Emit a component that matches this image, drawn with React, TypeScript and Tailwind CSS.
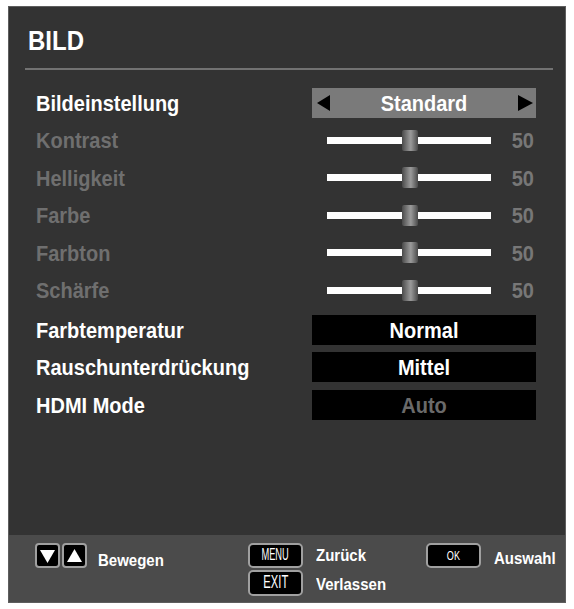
import React from "react";

const T = ({ children, className = "" }: { children: React.ReactNode; className?: string }) => (
  <span className={`inline-block scale-y-[1.12] ${className}`}>{children}</span>
);

const Slider = () => (
  <div className="flex w-[224px] items-center">
    <div className="relative ml-[15px] h-[7px] w-[164px] bg-white">
      <div className="absolute left-[75px] top-[-7px] h-[21px] w-[16px] rounded-[2px] bg-[linear-gradient(to_right,#4a4a4a,#8e8e8e_45%,#9a9a9a_55%,#4a4a4a)]" />
    </div>
    <div className="flex-1 pr-[2px] text-right text-[20px] font-bold text-[#777777]">
      <T>50</T>
    </div>
  </div>
);

const Row = ({ label, dim, children }: { label: string; dim?: boolean; children: React.ReactNode }) => (
  <div className="flex h-[37.5px] items-center justify-between pl-[27px] pr-[29px]">
    <div className={`text-[20px] font-bold ${dim ? "text-[#6f6f6f]" : "text-white"}`}>
      <T>{label}</T>
    </div>
    {children}
  </div>
);

const ValueBox = ({ text, dim }: { text: string; dim?: boolean }) => (
  <div
    className={`flex h-[30px] w-[224px] items-center justify-center bg-black text-[20px] font-bold ${
      dim ? "text-[#6a6a6a]" : "text-white"
    }`}
  >
    <T>{text}</T>
  </div>
);

const Key = ({ children, textClass }: { children: React.ReactNode; textClass: string }) => (
  <div className="flex h-[25px] w-[55px] items-center justify-center rounded-[5px] border-2 border-[#a0a0a0] bg-black text-white">
    <span className={`inline-block font-normal ${textClass}`}>{children}</span>
  </div>
);

const ArrowKey = ({ up }: { up?: boolean }) => (
  <div className="flex h-[25px] w-[25px] items-center justify-center rounded-[4px] border-2 border-[#a0a0a0] bg-black">
    <svg width="15" height="14" viewBox="0 0 15 14">
      {up ? <polygon points="7.5,0 15,13 0,13" fill="#fff" /> : <polygon points="0,1 15,1 7.5,14" fill="#fff" />}
    </svg>
  </div>
);

export default function App() {
  return (
    <div className="h-[609px] w-[574px] overflow-hidden bg-white pl-[8px] pt-[6px] font-['Liberation_Sans',Arial,sans-serif]">
      <div className="flex h-[597px] w-[558px] flex-col border border-[#5e5e5e] bg-[#333333]">
        <div className="flex-1">
          <div className="flex h-[61px] items-center pl-[19px] pt-[6px] text-[24px] font-bold text-white">
            <T className="scale-y-[1.15]">BILD</T>
          </div>
          <div className="ml-[16px] mr-[12px] h-[2px] bg-[#727272]" />
          <div className="mt-[14px]">
            <Row label="Bildeinstellung">
              <div className="flex h-[30px] w-[224px] items-center justify-between bg-[#7a7a7a] pl-[5px] pr-[3px] text-[20px] font-bold text-white">
                <svg width="13" height="16" viewBox="0 0 13 16">
                  <polygon points="0,8 13,0 13,16" fill="#000" />
                </svg>
                <T>Standard</T>
                <svg width="15" height="16" viewBox="0 0 15 16">
                  <polygon points="0,0 15,8 0,16" fill="#000" />
                </svg>
              </div>
            </Row>
            <Row label="Kontrast" dim>
              <Slider />
            </Row>
            <Row label="Helligkeit" dim>
              <Slider />
            </Row>
            <Row label="Farbe" dim>
              <Slider />
            </Row>
            <Row label="Farbton" dim>
              <Slider />
            </Row>
            <Row label="Schärfe" dim>
              <Slider />
            </Row>
            <div className="mt-[2px]">
              <Row label="Farbtemperatur">
                <ValueBox text="Normal" />
              </Row>
              <Row label="Rauschunterdrückung">
                <ValueBox text="Mittel" />
              </Row>
              <Row label="HDMI Mode">
                <ValueBox text="Auto" dim />
              </Row>
            </div>
          </div>
        </div>
        <div className="grid h-[67px] grid-cols-[213px_178px_1fr] bg-[#4b4b4b] pl-[26px] pt-[8px] text-[15px] font-bold text-white">
          <div className="flex items-start">
            <div className="flex gap-[2px]">
              <ArrowKey />
              <ArrowKey up />
            </div>
            <div className="ml-[11px] mt-[6px]">
              <T>Bewegen</T>
            </div>
          </div>
          <div className="flex flex-col gap-[2px]">
            <div className="flex items-center">
              <Key textClass="text-[15px] scale-x-[0.62] scale-y-[1.05]">MENU</Key>
              <div className="ml-[13px]">
                <T>Zurück</T>
              </div>
            </div>
            <div className="flex items-center">
              <div className="flex h-[26px] w-[55px] items-center justify-center rounded-[5px] border-2 border-[#a0a0a0] bg-black text-white">
                <span className="inline-block scale-x-[0.7] scale-y-[1.1] text-[16px] font-normal">EXIT</span>
              </div>
              <div className="ml-[13px] mt-[2px]">
                <T>Verlassen</T>
              </div>
            </div>
          </div>
          <div className="flex items-start">
            <Key textClass="text-[13px] scale-x-[0.7] scale-y-[1.05]">OK</Key>
            <div className="ml-[13px] mt-[4px]">
              <T>Auswahl</T>
            </div>
          </div>
        </div>
      </div>
    </div>
  );
}
